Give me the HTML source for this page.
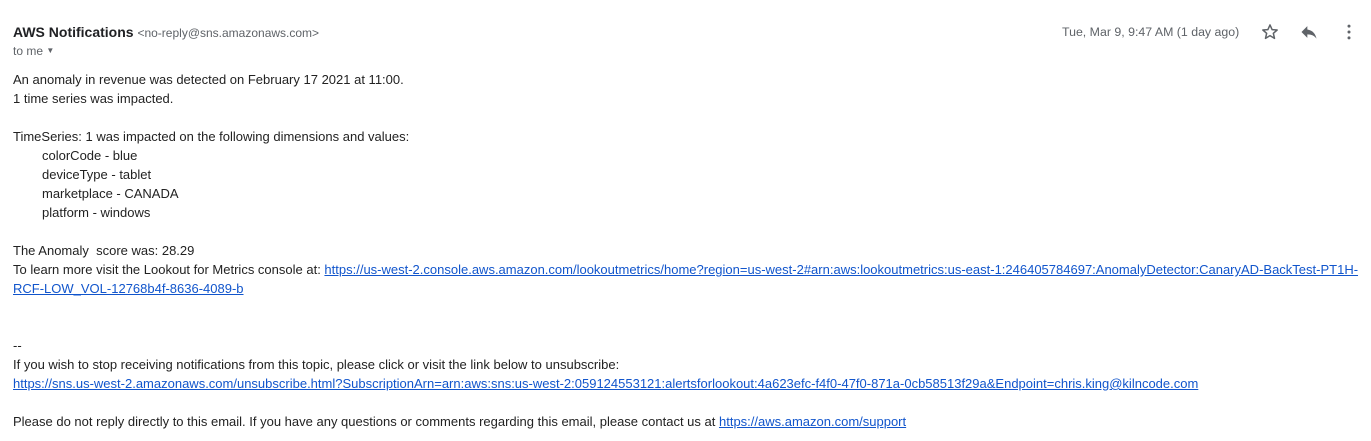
<!DOCTYPE html>
<html><head><style>
body{margin:0;background:#fff;font-family:"Liberation Sans",Arial,sans-serif;color:#222;width:1371px;height:441px;overflow:hidden;position:relative}
.hdr{position:absolute;left:13px;top:24px;font-size:14px;}
.hdr b{font-weight:bold;color:#202124}
.hdr span{font-size:12px;color:#5f6368}
.to{position:absolute;left:13px;top:44px;font-size:12px;color:#5f6368}
.date{position:absolute;left:1062px;top:25px;font-size:12.35px;color:#5f6368}
.body{position:absolute;left:13px;top:70px;font-size:13px;line-height:19px;white-space:pre;color:#222}
a{color:#1155cc;text-decoration:underline}
.ind{padding-left:29px}
</style></head><body>
<div class="hdr"><b>AWS Notifications</b> <span>&lt;no-reply@sns.amazonaws.com&gt;</span></div>
<div class="to">to me <span style="font-size:8px;vertical-align:2px">&#9660;</span></div>
<div class="date">Tue, Mar 9, 9:47 AM (1 day ago)</div>
<svg style="position:absolute;left:1260px;top:22px" width="20" height="20" viewBox="0 0 24 24"><path d="M12 3.5l2.5 5.6 6.1.5-4.6 4 1.4 6L12 16.4 6.6 19.6l1.4-6-4.6-4 6.1-.5z" fill="none" stroke="#5f6368" stroke-width="1.8" stroke-linejoin="round"/></svg>
<svg style="position:absolute;left:1299px;top:22px" width="20" height="20" viewBox="0 0 24 24"><path d="M10 9V5l-7 7 7 7v-4.1c5 0 8.5 1.6 11 5.1-1-5-4-10-11-11z" fill="#5f6368"/></svg>
<svg style="position:absolute;left:1339px;top:22px" width="20" height="20" viewBox="0 0 24 24"><circle cx="12" cy="5" r="1.8" fill="#5f6368"/><circle cx="12" cy="12" r="1.8" fill="#5f6368"/><circle cx="12" cy="19" r="1.8" fill="#5f6368"/></svg>
<div class="body">An anomaly in revenue was detected on February 17 2021 at 11:00.
1 time series was impacted.

TimeSeries: 1 was impacted on the following dimensions and values:
<span class="ind">colorCode - blue</span>
<span class="ind">deviceType - tablet</span>
<span class="ind">marketplace - CANADA</span>
<span class="ind">platform - windows</span>

The Anomaly  score was: 28.29
To learn more visit the Lookout for Metrics console at: <a>https://us-west-2.console.aws.amazon.com/lookoutmetrics/home?region=us-west-2#arn:aws:lookoutmetrics:us-east-1:246405784697:AnomalyDetector:CanaryAD-BackTest-PT1H-</a>
<a>RCF-LOW_VOL-12768b4f-8636-4089-b</a>


--
If you wish to stop receiving notifications from this topic, please click or visit the link below to unsubscribe:
<a>https://sns.us-west-2.amazonaws.com/unsubscribe.html?SubscriptionArn=arn:aws:sns:us-west-2:059124553121:alertsforlookout:4a623efc-f4f0-47f0-871a-0cb58513f29a&amp;Endpoint=chris.king@kilncode.com</a>

Please do not reply directly to this email. If you have any questions or comments regarding this email, please contact us at <a>https://aws.amazon.com/support</a></div>
</body></html>
